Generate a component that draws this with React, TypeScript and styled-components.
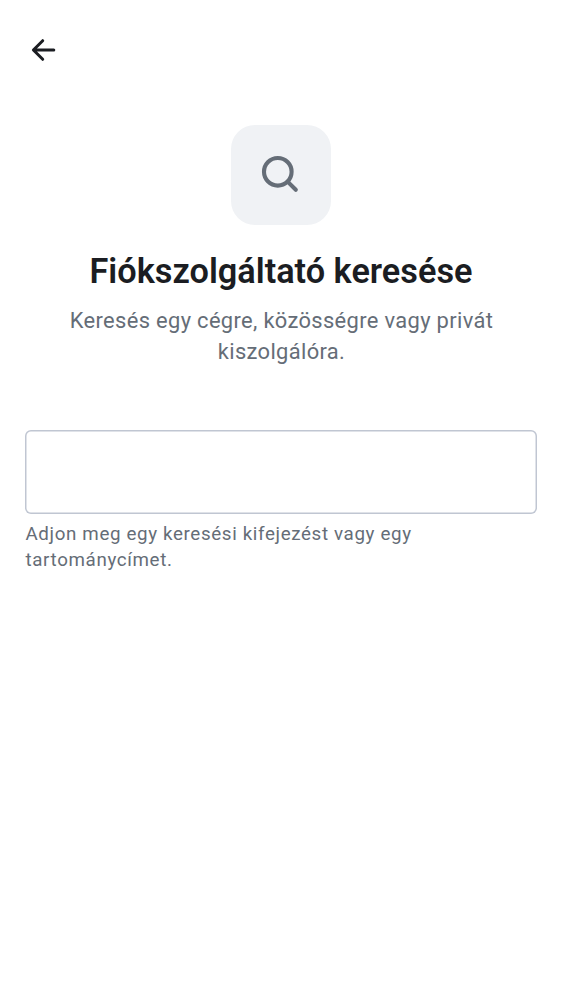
import React from "react";
import styled, { createGlobalStyle } from "styled-components";

const GlobalStyle = createGlobalStyle`
  * { box-sizing: border-box; }
  body { margin: 0; background: #fff; font-family: Roboto, sans-serif; }
`;

const Screen = styled.main`
  min-height: 1000px;
  padding: 0 25px;
  background: #fff;
`;

const TopBar = styled.header`
  height: 100px;
  display: flex;
  align-items: center;
`;

const BackButton = styled.button`
  width: 38px;
  height: 38px;
  padding: 0;
  border: 0;
  background: none;
  display: flex;
  align-items: center;
  justify-content: center;
`;

const Header = styled.section`
  padding-top: 25px;
  display: flex;
  flex-direction: column;
  align-items: center;
  text-align: center;
`;

const IconTile = styled.div`
  width: 100px;
  height: 100px;
  border-radius: 24px;
  background: #f0f2f5;
  display: flex;
  align-items: center;
  justify-content: center;
`;

const Title = styled.h1`
  margin: 25px 0 0;
  font-size: 34.3px;
  line-height: 43px;
  font-weight: 600;
  color: #1b1d22;
  white-space: nowrap;
`;

const Subtitle = styled.p`
  margin: 12px 0 0;
  width: 450px;
  font-size: 21.9px;
  font-weight: 370;
  line-height: 31.3px;
  letter-spacing: 0.34px;
  color: #656d77;
  padding-left: 1px;
`;

const Field = styled.label`
  display: block;
  margin-top: 62px;
`;

const Input = styled.input`
  display: block;
  width: 512px;
  height: 84px;
  padding: 0 25px;
  border: 0;
  border-radius: 6px;
  background: #fff;
  box-shadow: inset 0 0 0 1.5px #c0c6d2;
  font: inherit;
  font-size: 25px;
  outline: none;
`;

const Hint = styled.span`
  display: block;
  margin-top: 7px;
  padding-left: 0.5px;
  width: 440px;
  font-size: 18.75px;
  font-weight: 370;
  line-height: 26.3px;
  letter-spacing: 0.64px;
  color: #656d77;
`;

export default function App() {
  return (
    <Screen>
      <GlobalStyle />
      <TopBar>
        <BackButton aria-label="Vissza">
          <svg width="38" height="38" viewBox="0 0 38 38" fill="none" stroke="#1b1d22" strokeWidth="3" strokeLinecap="round" strokeLinejoin="round">
            <path d="M28.8 19H8.8M17.7 9.7 8.4 19l9.3 9.3" />
          </svg>
        </BackButton>
      </TopBar>
      <Header>
        <IconTile>
          <svg width="50" height="50" viewBox="0 0 50 50" fill="none" stroke="#656d77" strokeWidth="4.1" strokeLinecap="round">
            <circle cx="21.8" cy="21.8" r="13.8" />
            <path d="m31.6 31.6 8.2 8.2" />
          </svg>
        </IconTile>
        <Title>Fiókszolgáltató keresése</Title>
        <Subtitle>Keresés egy cégre, közösségre vagy privát kiszolgálóra.</Subtitle>
      </Header>
      <Field>
        <Input type="text" />
        <Hint>Adjon meg egy keresési kifejezést vagy egy tartománycímet.</Hint>
      </Field>
    </Screen>
  );
}
